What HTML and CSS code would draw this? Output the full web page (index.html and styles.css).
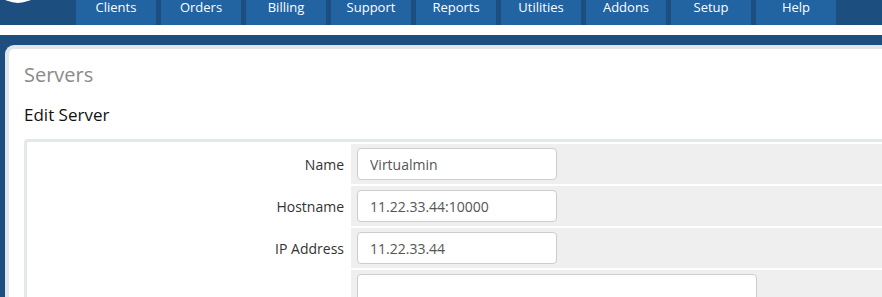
FILE: index.html
```html
<!DOCTYPE html>
<html lang="en">
<head>
<meta charset="utf-8">
<title>Servers - Edit Server</title>
<link rel="stylesheet" href="styles.css">
</head>
<body>
<header class="topbar">
  <div class="logo"><div class="logo-mark"></div></div>
  <nav class="nav">
    <a class="tab" href="#">Clients</a>
    <a class="tab" href="#">Orders</a>
    <a class="tab" href="#">Billing</a>
    <a class="tab" href="#">Support</a>
    <a class="tab" href="#">Reports</a>
    <a class="tab" href="#">Utilities</a>
    <a class="tab" href="#">Addons</a>
    <a class="tab" href="#">Setup</a>
    <a class="tab" href="#">Help</a>
  </nav>
</header>
<div class="strip"></div>
<div class="main">
  <div class="panel">
    <h1 class="title">Servers</h1>
    <h2 class="subtitle">Edit Server</h2>
    <div class="formbox">
      <table class="form">
        <tr>
          <td class="label">Name</td>
          <td class="field"><input class="input" type="text" value="Virtualmin"></td>
        </tr>
        <tr>
          <td class="label">Hostname</td>
          <td class="field"><input class="input" type="text" value="11.22.33.44:10000"></td>
        </tr>
        <tr>
          <td class="label">IP Address</td>
          <td class="field"><input class="input" type="text" value="11.22.33.44"></td>
        </tr>
        <tr>
          <td class="label">Assigned IP Addresses</td>
          <td class="field"><textarea class="textarea"></textarea></td>
        </tr>
      </table>
    </div>
  </div>
</div>
</body>
</html>
```
FILE: styles.css
```css
html, body {
  margin: 0;
  padding: 0;
  overflow: hidden;
  height: 100%;
}
body {
  background: #1c4f80;
  font-family: "Open Sans", "DejaVu Sans", sans-serif;
}
.topbar {
  display: flex;
  height: 25px;
  overflow: hidden;
  background: #1c4f80;
}
.logo {
  width: 76px;
  flex-shrink: 0;
}
.logo-mark {
  width: 56px;
  height: 56px;
  border-radius: 50%;
  background: #ffffff;
  margin: -53px 0 0 -10px;
}
.nav {
  display: flex;
  gap: 5px;
}
.tab {
  display: block;
  width: 80px;
  height: 25px;
  background: #2263a2;
  color: #ffffff;
  text-decoration: none;
  text-align: center;
  font-size: 13px;
  line-height: 14px;
}
.strip {
  height: 10px;
  background: #ffffff;
}
.main {
  padding: 10px 0 0 5px;
}
.panel {
  background: #ffffff;
  border-top: 4px solid #e1e6ea;
  border-left: 4px solid #e1e6ea;
  border-top-left-radius: 9px;
  margin-right: -40px;
  padding: 12px 0 0 15px;
  height: 400px;
}
.title {
  margin: 0;
  font-size: 20px;
  font-weight: normal;
  color: #8a8a8a;
  line-height: normal;
}
.subtitle {
  margin: 15px 0 0 0;
  font-size: 17px;
  font-weight: normal;
  color: #111111;
  line-height: normal;
}
.formbox {
  margin-top: 13px;
  border: 3px solid #e3e8ec;
  border-right: none;
  border-radius: 4px 0 0 4px;
}
.form {
  width: 100%;
  border-spacing: 2px;
  font-size: 14px;
}
.label {
  width: 315px;
  padding: 0 5px 0 0;
  text-align: right;
  color: #333333;
  vertical-align: middle;
  background: #ffffff;
}
.field {
  background: #efefef;
  padding: 4px 6px;
  vertical-align: middle;
}
.input {
  display: block;
  box-sizing: border-box;
  width: 200px;
  height: 32px;
  padding: 0 12px;
  border: 1px solid #cccccc;
  border-radius: 4px;
  background: #ffffff;
  font-family: "Open Sans", "DejaVu Sans", sans-serif;
  font-size: 14px;
  color: #555555;
}
.textarea {
  display: block;
  box-sizing: border-box;
  width: 400px;
  height: 80px;
  border: 1px solid #cccccc;
  border-radius: 4px;
  background: #ffffff;
  resize: none;
}
```
